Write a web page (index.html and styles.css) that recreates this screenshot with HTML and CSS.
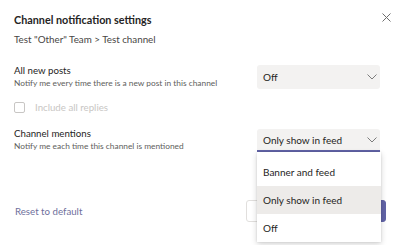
FILE: index.html
```html
<!DOCTYPE html>
<html>
<head>
<meta charset="utf-8">
<link rel="stylesheet" href="styles.css">
</head>
<body>
<div class="dialog">
  <div class="header">
    <h1 class="title">Channel notification settings</h1>
    <button class="close" aria-label="Close">
      <svg width="9" height="9" viewBox="0 0 9 9"><path d="M0.5 0.5L8.5 8.5M8.5 0.5L0.5 8.5" stroke="#6e6e6e" stroke-width="1" fill="none"/></svg>
    </button>
  </div>
  <div class="crumb">Test "Other" Team &gt; Test channel</div>

  <div class="setting first">
    <div class="label">
      <div class="name">All new posts</div>
      <div class="desc">Notify me every time there is a new post in this channel</div>
    </div>
    <div class="select">
      <span>Off</span>
      <svg class="chev" width="10" height="6" viewBox="0 0 10 6"><path d="M0.5 0.5L5 5L9.5 0.5" stroke="#6e6e6e" stroke-width="0.9" fill="none"/></svg>
    </div>
  </div>

  <div class="check">
    <span class="box"></span>
    <span class="check-label">Include all replies</span>
  </div>

  <div class="setting second">
    <div class="label">
      <div class="name">Channel mentions</div>
      <div class="desc">Notify me each time this channel is mentioned</div>
    </div>
    <div class="select open">
      <span>Only show in feed</span>
      <svg class="chev" width="10" height="6" viewBox="0 0 10 6"><path d="M0.5 0.5L5 5L9.5 0.5" stroke="#6e6e6e" stroke-width="0.9" fill="none"/></svg>
      <ul class="menu">
        <li>Banner and feed</li>
        <li class="active">Only show in feed</li>
        <li>Off</li>
      </ul>
    </div>
  </div>

  <div class="footer">
    <span class="reset">Reset to default</span>
    <div class="actions">
      <button class="btn">Cancel</button>
      <button class="btn primary">Save</button>
    </div>
  </div>
</div>
</body>
</html>
```
FILE: styles.css
```css
* { box-sizing: border-box; }
html, body { margin: 0; padding: 0; background: #fff; }
body {
  font-family: "Lato", "Open Sans", sans-serif;
  color: #252423;
  width: 400px;
  height: 245px;
  overflow: hidden;
}
.dialog {
  padding: 10px 9px 0 14px;
}
.header {
  display: flex;
  align-items: flex-start;
  justify-content: space-between;
  height: 20px;
}
.title {
  margin: 0;
  font-size: 10.8px;
  font-weight: 700;
  line-height: 20px;
  color: #252423;
}
.close {
  border: 0;
  background: none;
  padding: 0;
  width: 9px;
  height: 9px;
  display: flex;
  margin-top: 3px;
}
.crumb {
  font-size: 9.8px;
  line-height: 16px;
  margin-top: 1px;
  color: #484644;
}
.setting {
  display: flex;
  align-items: flex-start;
  justify-content: space-between;
  padding-right: 11px;
}
.setting.first { margin-top: 16px; }
.setting.first .select { margin-top: 2px; }
.setting.second { margin-top: 13px; }
.setting.second .select { margin-top: 3px; }
.name {
  font-size: 9.7px;
  line-height: 14px;
  color: #252423;
}
.desc {
  font-size: 8.35px;
  line-height: 12px;
  color: #605e5c;
}
.select {
  position: relative;
  width: 123px;
  height: 24px;
  background: #f3f2f1;
  border-radius: 3px;
  display: flex;
  align-items: center;
  justify-content: space-between;
  padding: 0 3px 0 6px;
  font-size: 10px;
  color: #252423;
}
.select.open {
  border-bottom: 2px solid #6264a7;
  border-radius: 3px 3px 0 0;
  height: 23px;
  padding-top: 1px;
}
.check {
  display: flex;
  align-items: center;
  height: 11px;
  margin-top: 13px;
}
.box {
  width: 11px;
  height: 11px;
  border: 1px solid #c8c6c4;
  border-radius: 2px;
}
.check-label {
  margin-left: 10px;
  font-size: 9.7px;
  line-height: 11px;
  color: #c8c6c4;
}
.menu {
  position: absolute;
  left: 0;
  top: 23px;
  width: 124px;
  margin: 0;
  padding: 6px 0 0;
  list-style: none;
  background: #fff;
  box-shadow: 0 2px 6px rgba(0,0,0,0.18), 0 0 2px rgba(0,0,0,0.1);
  z-index: 5;
}
.menu li {
  height: 28px;
  line-height: 28px;
  padding-left: 6px;
  font-size: 10px;
  color: #252423;
}
.menu li.active { background: #edebe9; }
.footer {
  display: flex;
  align-items: center;
  justify-content: space-between;
  margin-top: 48px;
  padding-right: 5px;
  height: 22px;
}
.reset {
  margin-left: 1px;
  font-size: 9.7px;
  color: #6e6f9c;
}
.actions {
  display: flex;
  gap: 8px;
}
.btn {
  height: 22px;
  width: 66px;
  border: 1px solid #e1dfdd;
  background: #fff;
  border-radius: 3px;
  font-family: inherit;
  font-size: 10px;
}
.btn.primary {
  background: #6264a7;
  border-color: #6264a7;
  color: #fff;
}
```
